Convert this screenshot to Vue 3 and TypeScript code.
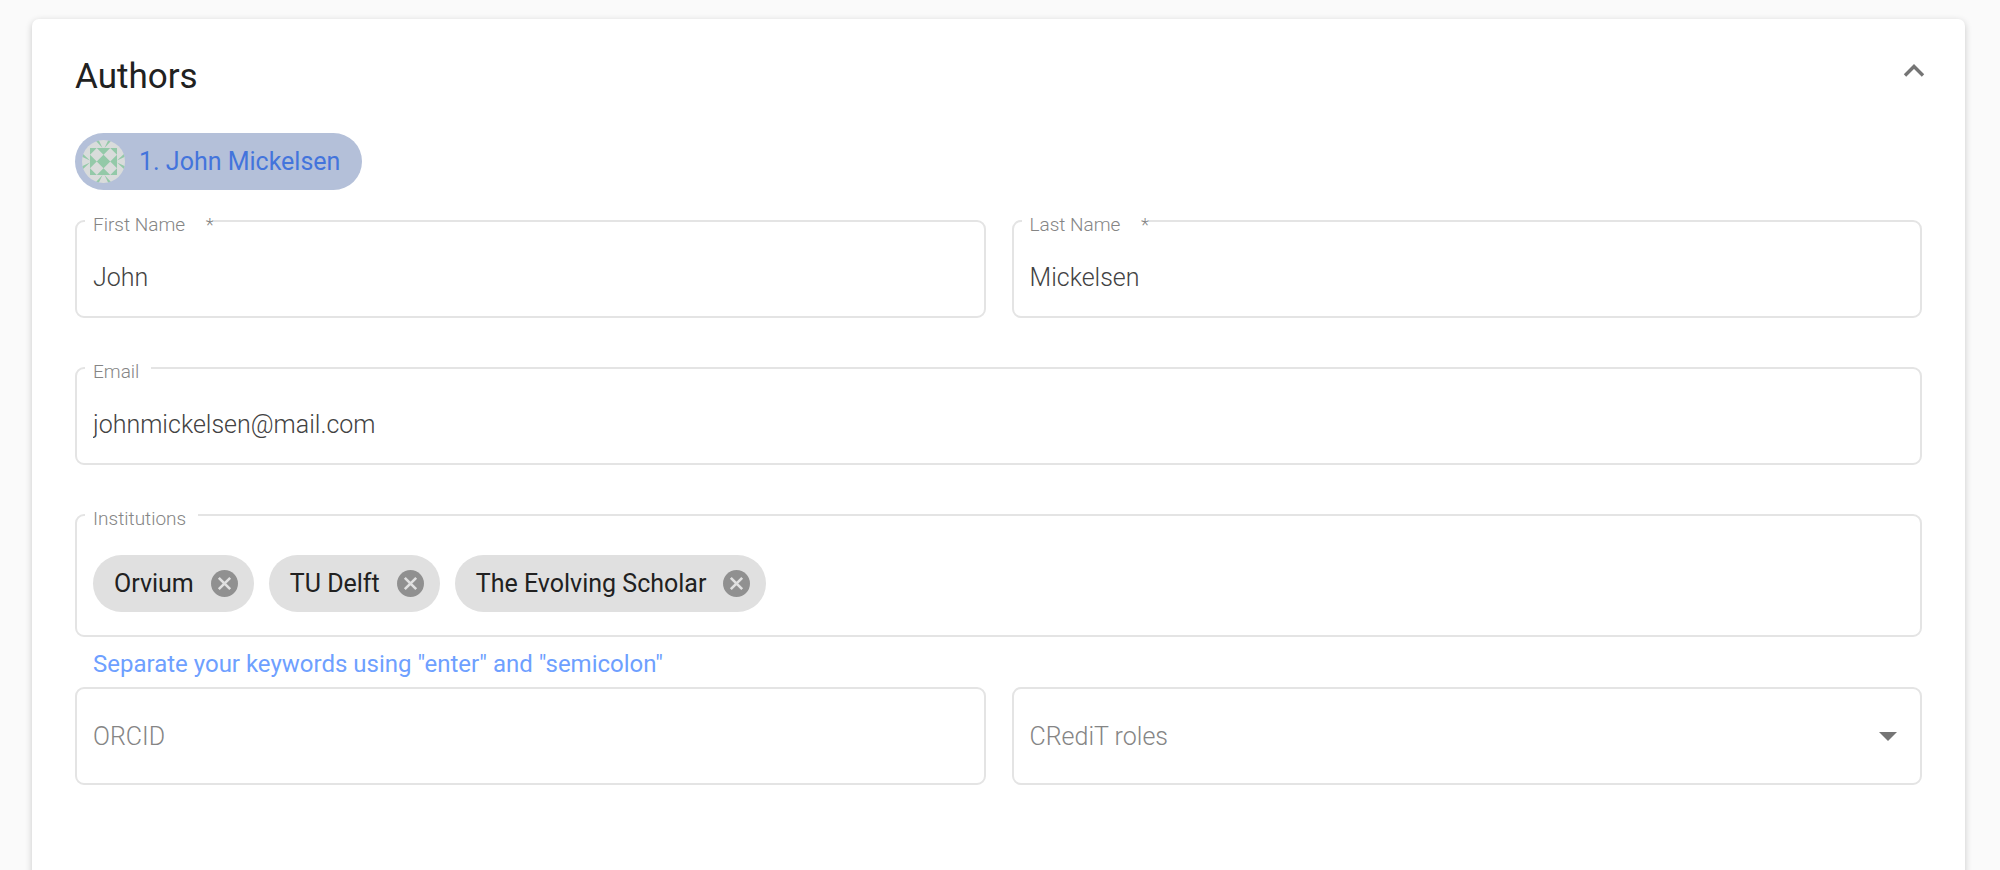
<script setup lang="ts">
import { ref } from 'vue'

const firstName = ref('John')
const lastName = ref('Mickelsen')
const email = ref('johnmickelsen@mail.com')
const orcid = ref('')
const role = ref('')
const expanded = ref(true)
const institutions = ref<string[]>(['Orvium', 'TU Delft', 'The Evolving Scholar'])
const draft = ref('')

const roles: string[] = ['Conceptualization', 'Methodology', 'Software', 'Validation']

function removeInstitution(name: string): void {
  institutions.value = institutions.value.filter((item) => item !== name)
}

function addInstitution(): void {
  const name = draft.value.replace(';', '').trim()
  if (name && !institutions.value.includes(name)) institutions.value.push(name)
  draft.value = ''
}
</script>

<template>
  <main class="page">
    <section class="card">
      <header class="head">
        <h1 class="title">Authors</h1>
        <button class="toggle" type="button" aria-label="Toggle authors" :aria-expanded="expanded" @click="expanded = !expanded">
          <svg width="24" height="16" viewBox="0 0 24 16" aria-hidden="true">
            <path d="M3 12.5 12 3.5l9 9" fill="none" stroke="#757575" stroke-width="3.4" />
          </svg>
        </button>
      </header>

      <form v-if="expanded" class="form" @submit.prevent>
        <button class="author" type="button">
          <svg class="avatar" width="43" height="43" viewBox="0 0 43 43" aria-hidden="true">
            <defs>
              <clipPath id="avatar-clip"><circle cx="21.5" cy="21.5" r="21.5" /></clipPath>
            </defs>
            <g clip-path="url(#avatar-clip)">
              <rect width="43" height="43" fill="#d9dcdb" />
              <rect x="8" y="8" width="27" height="27" fill="#93c9a8" />
              <g fill="#d9dcdb">
                <path d="M14.75 8l6.75 6.75-6.75 6.75L8 14.75z" />
                <path d="M28.25 8 35 14.75l-6.75 6.75-6.75-6.75z" />
                <path d="M14.75 21.5l6.75 6.75L14.75 35 8 28.25z" />
                <path d="M28.25 21.5 35 28.25 28.25 35l-6.75-6.75z" />
              </g>
              <g fill="#93c9a8">
                <path v-for="turn in [0, 90, 180, 270]" :key="turn" :transform="`rotate(${turn} 21.5 21.5)`" d="M8-5.5h6L20.5 8zM35-5.5h-6L22.5 8z" />
              </g>
            </g>
          </svg>
          <span>1. John Mickelsen</span>
        </button>

        <div class="row">
          <div class="field">
            <label class="label required" for="first-name">First Name <span class="star">*</span></label>
            <input id="first-name" v-model="firstName" class="control labelled" type="text" />
          </div>
          <div class="field">
            <label class="label required" for="last-name">Last Name <span class="star">*</span></label>
            <input id="last-name" v-model="lastName" class="control labelled" type="text" />
          </div>
        </div>

        <div class="field">
          <label class="label" for="email">Email</label>
          <input id="email" v-model="email" class="control labelled" type="email" />
        </div>

        <div class="group">
          <div class="field chips">
            <label class="label" for="institutions">Institutions</label>
            <span v-for="name in institutions" :key="name" class="chip">
              {{ name }}
              <button class="remove" type="button" :aria-label="`Remove ${name}`" @click="removeInstitution(name)">
                <svg width="27" height="27" viewBox="0 0 27 27" aria-hidden="true">
                  <circle cx="13.5" cy="13.5" r="13.5" fill="#909090" />
                  <path d="M7.8 7.8l11.4 11.4M19.2 7.8 7.8 19.2" stroke="#e0e0e0" stroke-width="2.6" />
                </svg>
              </button>
            </span>
            <input id="institutions" v-model="draft" class="draft" type="text" @keydown.enter.prevent="addInstitution" @keyup.;="addInstitution" />
          </div>
          <p class="hint">Separate your keywords using "enter" and "semicolon"</p>
          <div class="row">
            <div class="field">
              <input v-model="orcid" class="control" type="text" placeholder="ORCID" aria-label="ORCID" />
            </div>
            <div class="field">
              <select v-model="role" class="control select" aria-label="CRediT roles">
                <option value="" disabled>CRediT roles</option>
                <option v-for="item in roles" :key="item" :value="item">{{ item }}</option>
              </select>
              <svg class="arrow" width="18" height="9" viewBox="0 0 18 9" aria-hidden="true">
                <path d="M0 0h18L9 9z" fill="#757575" />
              </svg>
            </div>
          </div>
        </div>
      </form>
    </section>
  </main>
</template>

<style>
body {
  margin: 0;
  background: #fafafa;
}
</style>

<style scoped>
.page {
  box-sizing: border-box;
  min-height: 100vh;
  padding: 19px 35px 0 32px;
  display: flex;
  overflow: hidden;
  font-family: Roboto, "Liberation Sans", sans-serif;
  font-size: 25px;
  color: #212121;
}
.card {
  flex: 1;
  min-width: 0;
  margin-bottom: -20px;
  padding: 34px 43px 106px;
  border-radius: 7px;
  background: #fff;
  box-shadow: 0 2px 7px rgba(0, 0, 0, 0.2);
}
.head {
  display: flex;
  align-items: center;
  justify-content: space-between;
  height: 48px;
}
.title {
  margin: 0;
  font-size: 35px;
  font-weight: 400;
  line-height: 48px;
}
button {
  padding: 0;
  border: 0;
  background: none;
  font: inherit;
  cursor: pointer;
}
.toggle {
  display: flex;
  margin: 0 -4px 12px 0;
}
.form {
  display: flex;
  flex-direction: column;
  gap: 49px;
  padding-top: 32px;
}
.author {
  display: flex;
  align-items: center;
  align-self: flex-start;
  gap: 14px;
  height: 57px;
  margin-bottom: -19px;
  padding: 0 22px 0 7px;
  border-radius: 29px;
  background: #b4c0d9;
  color: #4374dc;
}
.row {
  display: grid;
  grid-template-columns: 1fr 1fr;
  gap: 26px;
}
.field {
  position: relative;
  box-sizing: border-box;
  min-width: 0;
  border: 2px solid #e4e4e4;
  border-radius: 9px;
}
.label {
  position: absolute;
  top: -9px;
  left: 8px;
  padding: 0 12px 0 8px;
  background: #fff;
  color: #858585;
  font-size: 19px;
  font-weight: 300;
  line-height: 24px;
}
.required {
  padding-right: 0;
}
.star {
  margin-left: 16px;
}
.control {
  display: block;
  box-sizing: border-box;
  width: 100%;
  height: 94px;
  padding: 0 16px;
  border: 0;
  outline: 0;
  background: transparent;
  color: #424242;
  font: inherit;
  font-weight: 300;
}
.labelled {
  padding-top: 16px;
}
.control::placeholder {
  color: #858585;
  opacity: 1;
}
.select {
  appearance: none;
  color: #858585;
}
.arrow {
  position: absolute;
  top: 43px;
  right: 23px;
  pointer-events: none;
}
.chips {
  display: flex;
  flex-wrap: wrap;
  gap: 15px;
  padding: 39px 16px 23px;
}
.chip {
  display: flex;
  align-items: center;
  gap: 17px;
  height: 57px;
  padding: 0 16px 0 21px;
  box-sizing: border-box;
  border-radius: 29px;
  background: #e0e0e0;
}
.remove,
.remove svg {
  display: block;
}
.draft {
  flex: 1;
  min-width: 160px;
  padding: 0;
  border: 0;
  outline: 0;
  background: transparent;
  font: inherit;
  font-weight: 300;
}
.hint {
  margin: 0;
  padding: 11px 18px 7px;
  color: #6ea0ff;
  font-size: 24px;
  line-height: 32px;
}
</style>
